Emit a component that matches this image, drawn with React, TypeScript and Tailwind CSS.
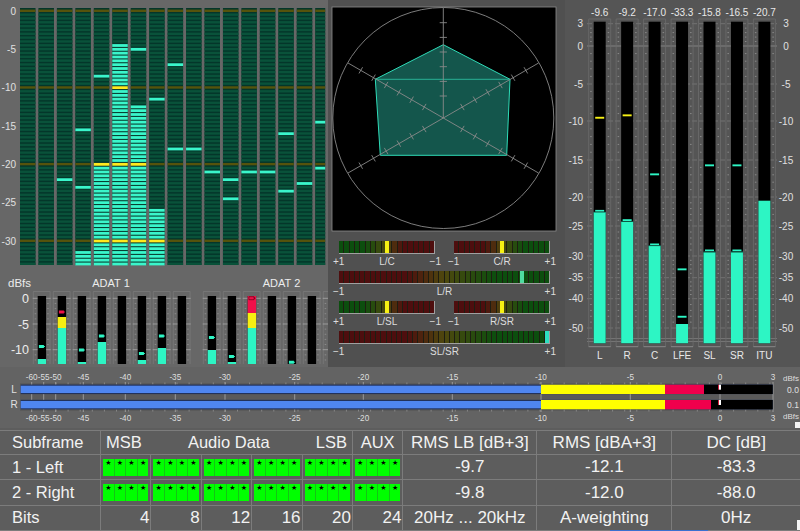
const TEAL = "#2df5c4";

// spectrum bars: fill start + peak holds, in dBfs
const bands: { fill?: number; peaks: number[] }[] = [
  { peaks: [] },
  { peaks: [] },
  { peaks: [-22] },
  { fill: -31.5, peaks: [-15.5, -23] },
  { fill: -20, peaks: [-8.5] },
  { fill: -4.5, peaks: [] },
  { fill: -12.5, peaks: [-5] },
  { fill: -26, peaks: [-11.5] },
  { peaks: [-7, -18] },
  { peaks: [-18] },
  { peaks: [-21] },
  { peaks: [-22, -24.5] },
  { peaks: [-21] },
  { peaks: [-21] },
  { peaks: [-16, -23.5] },
  { peaks: [-22.5] },
  { peaks: [-14.5, -20.5] },
];

function Spectrum() {
  const segs = Array.from({ length: 67 }, (_, i) => i);
  return (
    <svg viewBox="0 0 328 270" className="block w-[328px] h-[270px]">
      {[0, -5, -10, -15, -20, -25, -30].map((d) => (
        <text key={d} x={16} y={11 + -d * 7.667 + 3.5} textAnchor="end" fontSize={10} fill="#e0e0e0">
          {d}
        </text>
      ))}
      {bands.map((b, n) => {
        const x = 20 + n * 18.45;
        const w = n === 16 ? 10 : 15.5;
        return (
          <g key={n}>
            <rect x={x} y={8} width={w} height={257} fill="#04362a" />
            {segs.map((i) => {
              const db = -i / 2;
              const major = i % 20 === 0;
              const on = (b.fill !== undefined && db <= b.fill) || b.peaks.includes(db);
              const color = on ? (major ? "#ffe91e" : "#3af6cb") : major ? "#55530c" : "#09523a";
              return <rect key={i} x={x} y={11 + i * 3.833 - 1.4} width={w} height={on ? 2.8 : 2.4} fill={color} />;
            })}
          </g>
        );
      })}
    </svg>
  );
}

const adat: { x: number; top?: number; yellow?: number; red?: number; peak?: number; peakRed?: boolean }[] = [
  { x: 37.7, top: 359, peak: 346.3 },
  { x: 57.7, top: 328, yellow: 317, peak: 311.7, peakRed: true },
  { x: 77.7, top: 362, peak: 349.7 },
  { x: 97.7, top: 342, peak: 335.7 },
  { x: 117.7 },
  { x: 137.7, top: 360, peak: 353.3 },
  { x: 157.7, top: 348, peak: 335.7 },
  { x: 177.7 },
  { x: 207.7, top: 350, peak: 337.3 },
  { x: 227.7, top: 362, peak: 356.3 },
  { x: 247.7, top: 328, yellow: 313, red: 296, peak: 298, peakRed: true },
  { x: 267.7 },
  { x: 287.7, peak: 362 },
  { x: 307.7 },
];

function AdatMeters() {
  const ticks = Array.from({ length: 13 }, (_, i) => 298.3 + i * 5.14);
  return (
    <svg viewBox="0 270 328 97" className="block w-[328px] h-[97px]">
      <text x={8} y={287} fontSize={11.5} fill="#ececec">dBfs</text>
      <text x={111} y={287} fontSize={11} fill="#ececec" textAnchor="middle">ADAT 1</text>
      <text x={281.5} y={287} fontSize={11} fill="#ececec" textAnchor="middle">ADAT 2</text>
      {[0, -5, -10].map((d) => (
        <text key={d} x={29} y={298.3 + -d * 5.14 + 4.5} fontSize={12.5} fill="#ececec" textAnchor="end">
          {d}
        </text>
      ))}
      {[...adat, { x: 327.7 }].map((m) => (
        <g key={m.x} stroke="#7a7a7a" strokeWidth={0.8}>
          <path d={`M${m.x - 4.4} 364V291.5H${m.x + 12.4}V364`} fill="none" />
          {ticks.map((y, i) => (
            <path key={i} d={i % 5 === 0 ? `M${m.x - 5} ${y}H${m.x + 13}` : `M${m.x - 3} ${y}H${m.x - 1.5}M${m.x + 9.5} ${y}H${m.x + 11}`} stroke={i % 5 === 0 ? "#a8a8a8" : "#949494"} />
          ))}
        </g>
      ))}
      {adat.map((m) => (
        <g key={m.x}>
          <rect x={m.x} y={296} width={8.4} height={68} fill="#000" />
          {m.top !== undefined && <rect x={m.x} y={m.top} width={8.4} height={364 - m.top} fill={TEAL} />}
          {m.yellow !== undefined && m.top !== undefined && <rect x={m.x} y={m.yellow} width={8.4} height={m.top - m.yellow} fill="#f6ee12" />}
          {m.red !== undefined && m.yellow !== undefined && <rect x={m.x} y={m.red} width={8.4} height={m.yellow - m.red} fill="#f0104a" />}
          {m.peak !== undefined && (
            <path d={`M${m.x + 1.2} ${m.peak - 1.3}h5v1h1v1h-1v1h-5z`} fill={m.peakRed ? "#f0104a" : TEAL} stroke={m.red ? "#300" : "none"} strokeWidth={0.5} />
          )}
        </g>
      ))}
    </svg>
  );
}

function Vectorscope() {
  const cx = 443.3;
  const cy = 118;
  const spokes = [
    [0, -1],
    [-0.866, -0.5],
    [0.866, -0.5],
    [-0.866, 0.5],
    [0.866, 0.5],
  ];
  const radii = [22, 36.6, 51.3, 66, 80.6, 95.3];
  return (
    <svg viewBox="328 0 237 235" className="block w-[237px] h-[235px]">
      <rect x={332} y={7} width={224} height={224} fill="#000" stroke="#8c8c8c" strokeWidth={0.8} />
      <circle cx={cx} cy={cy} r={110.5} fill="none" stroke="#8a8a8a" strokeWidth={0.9} />
      <path d="M443.3 44.7L510 79.3L506.7 155.3H380.3L375.3 79.3Z" fill="#14564c" stroke="#2fdcb8" strokeWidth={1} />
      <path d="M375.3 79.3H510" stroke="#2fc8a8" strokeWidth={0.8} />
      {spokes.map(([dx, dy], i) => (
        <g key={i} stroke="#8a8a8a" strokeWidth={0.9}>
          <path d={`M${cx} ${cy}L${cx + dx * 110} ${cy + dy * 110}`} />
          {radii.map((r) => {
            const px = cx + dx * r;
            const py = cy + dy * r;
            return <path key={r} d={`M${px - dy * 3.6} ${py + dx * 3.6}L${px + dy * 3.6} ${py - dx * 3.6}`} />;
          })}
        </g>
      ))}
    </svg>
  );
}

const ledGreen = [12, 78, 14];
const ledYellow = [78, 72, 14];
const ledRed = [78, 14, 14];

function ledColor(t: number) {
  const mix = (a: number[], b: number[], k: number) => a.map((v, i) => Math.round(v + (b[i] - v) * k));
  const c = t < 0.5 ? mix(ledGreen, ledYellow, Math.max(0, (t - 0.25) / 0.25)) : mix(ledYellow, ledRed, Math.min(1, (t - 0.5) / 0.18));
  return `rgb(${c.join(",")})`;
}

// from "green" end to "red" end; redFirst flips the run
function CorrMeter({ count, redFirst, pos, marker }: { count: number; redFirst?: boolean; pos: number; marker: string }) {
  return (
    <div className="relative flex h-[13px] flex-1 gap-px border-b border-r border-[#a0a0a0] bg-[#1e1e12]">
      {Array.from({ length: count }, (_, i) => {
        const t = i / (count - 1);
        return <div key={i} className="flex-1" style={{ backgroundColor: ledColor(redFirst ? 1 - t : t) }} />;
      })}
      <div className="absolute top-0 h-full w-[4px]" style={{ left: pos, backgroundColor: marker }} />
    </div>
  );
}

function LabelRow({ items }: { items: string[] }) {
  return (
    <div className="-mx-[6px] mt-[2px] flex justify-between text-[10px] leading-[12px] text-[#dcdcdc]">
      {items.map((t) => (
        <span key={t}>{t}</span>
      ))}
    </div>
  );
}

function CorrelationPanel() {
  return (
    <div className="flex flex-col pl-[11px] pr-[15px] pt-[6px]">
      <div className="flex h-[30px] gap-[19px]">
        <div className="flex-1">
          <CorrMeter count={18} pos={46} marker="#f6f014" />
          <LabelRow items={["+1", "L/C", "−1"]} />
        </div>
        <div className="flex-1">
          <CorrMeter count={18} redFirst pos={46} marker="#f6f014" />
          <LabelRow items={["−1", "C/R", "+1"]} />
        </div>
      </div>
      <div className="h-[30px]">
        <CorrMeter count={40} redFirst pos={181} marker="#4fdca0" />
        <LabelRow items={["−1", "L/R", "+1"]} />
      </div>
      <div className="flex h-[30px] gap-[19px]">
        <div className="flex-1">
          <CorrMeter count={18} pos={46} marker="#f6f014" />
          <LabelRow items={["+1", "L/SL", "−1"]} />
        </div>
        <div className="flex-1">
          <CorrMeter count={18} redFirst pos={46} marker="#f6f014" />
          <LabelRow items={["−1", "R/SR", "+1"]} />
        </div>
      </div>
      <div className="h-[30px]">
        <CorrMeter count={40} redFirst pos={206} marker="#2ce0c0" />
        <LabelRow items={["−1", "SL/SR", "+1"]} />
      </div>
    </div>
  );
}

const channels = [
  { name: "L", val: "-9.6", top: 212, hold: [210.7], peaks: [{ y: 117.7, c: "#f6f014" }] },
  { name: "R", val: "-9.2", top: 221.7, hold: [220], peaks: [{ y: 115.3, c: "#f6f014" }] },
  { name: "C", val: "-17.0", top: 245.7, hold: [244.3], peaks: [{ y: 174.3, c: TEAL }] },
  { name: "LFE", val: "-33.3", top: 324, hold: [], peaks: [{ y: 269.3, c: TEAL }, { y: 316.7, c: TEAL }] },
  { name: "SL", val: "-15.8", top: 252.3, hold: [250.3], peaks: [{ y: 165.3, c: TEAL }] },
  { name: "SR", val: "-16.5", top: 252.3, hold: [250.3], peaks: [{ y: 165.3, c: TEAL }] },
  { name: "ITU", val: "-20.7", top: 200.7, hold: [], peaks: [] },
];

const scale: [string, number][] = [
  ["3", 23.7],
  ["0", 46],
  ["-5", 84],
  ["-10", 121],
  ["-15", 160],
  ["-20", 197],
  ["-25", 226],
  ["-30", 256],
  ["-35", 277.7],
  ["-40", 298.7],
  ["-50", 328],
];

function LevelMeters() {
  const minor: number[] = [];
  scale.slice(0, -1).forEach(([, y], i) => {
    const next = scale[i + 1][1];
    for (let k = 1; k < 5; k++) minor.push(y + ((next - y) * k) / 5);
  });
  return (
    <svg viewBox="565 0 235 367" className="block w-[235px] h-[367px]">
      {scale.map(([t, y]) => (
        <g key={t}>
          <text x={583} y={y + 3.5} fontSize={10} fill="#e0e0e0" textAnchor="end">{t}</text>
          <text x={786} y={y + 3.5} fontSize={10} fill="#e0e0e0" textAnchor="middle">{t}</text>
          <path d={`M587 ${y}H777`} stroke={t === "0" ? "#8e8e8e" : "#787878"} strokeWidth={0.8} strokeDasharray={t === "0" ? undefined : "5 2"} />
        </g>
      ))}
      <path d="M587 338.5H777M587 341.5H777" stroke="#828282" strokeWidth={0.7} />
      {channels.map((c, n) => {
        const x = 593.7 + n * 27.45;
        return (
          <g key={c.name}>
            <path d={`M${x - 5} 346.7V19H${x + 17}V346.7`} fill="none" stroke="#6c6c6c" strokeWidth={0.8} />
            <path d={`M${x - 5} 346.7H${x + 17}`} stroke="#969696" strokeWidth={0.8} />
            {minor.map((y) => (
              <path key={y} d={`M${x - 3.5} ${y}H${x - 2}M${x + 14} ${y}H${x + 15.5}`} stroke="#989898" strokeWidth={0.8} />
            ))}
            <text x={x + 6} y={15.5} fontSize={10} fill="#e8e8e8" textAnchor="middle">{c.val}</text>
            <text x={x + 6} y={358.5} fontSize={10} fill="#e8e8e8" textAnchor="middle">{c.name}</text>
            <rect x={x} y={21.7} width={12} height={321.6} fill="#000" />
            <rect x={x} y={c.top} width={12} height={343.3 - c.top} fill={TEAL} />
            {c.hold.map((y) => (
              <g key={y}>
                <rect x={x + 1.5} y={y - 0.8} width={9} height={1.8} fill={TEAL} />
                <rect x={x} y={y + 1} width={12} height={0.8} fill="#0d5a48" />
              </g>
            ))}
            {c.peaks.map((p) => (
              <rect key={p.y} x={x + 1.5} y={p.y - 0.9} width={9} height={1.9} fill={p.c} />
            ))}
          </g>
        );
      })}
    </svg>
  );
}

const lrTicks: [string, number][] = [
  ["-60", 31.7],
  ["-55", 43.7],
  ["-50", 55.7],
  ["-45", 83.3],
  ["-40", 125.3],
  ["-35", 175.3],
  ["-30", 225],
  ["-25", 294.7],
  ["-20", 363.3],
  ["-15", 452.3],
  ["-10", 541],
  ["-5", 630.3],
  ["0", 720],
  ["3", 773],
];

function StereoBars() {
  const rows = [
    { y: 385.7, redEnd: 704, val: "0.0", name: "L" },
    { y: 401, redEnd: 711, val: "0.1", name: "R" },
  ];
  const minor = Array.from({ length: 60 }, (_, i) => 56 + i * 12.1);
  return (
    <svg viewBox="0 367 800 61" className="block w-[800px] h-[61px]">
      <rect x={20} y={383} width={753} height={28} fill="#5a5a5a" />
      {minor.map((x) => (
        <path key={x} d={`M${x} 382.5v2M${x} 409.5v2`} stroke="#9a9a9a" strokeWidth={0.7} />
      ))}
      {lrTicks.map(([t, x]) => (
        <g key={t}>
          <text x={x} y={380} fontSize={8.2} fill="#dedede" textAnchor="middle">{t}</text>
          <text x={x} y={421} fontSize={8.2} fill="#dedede" textAnchor="middle">{t}</text>
          <path d={`M${x} 382V412`} stroke="#a8a8a8" strokeWidth={0.8} />
        </g>
      ))}
      {rows.map((r) => (
        <g key={r.name}>
          <rect x={20.7} y={r.y - 1.2} width={752} height={9.6} fill="#22325a" />
          <rect x={20.7} y={r.y} width={520.3} height={7.3} fill="#4f86f0" />
          <rect x={541} y={r.y - 1} width={124} height={9.3} fill="#ffff00" />
          <rect x={665} y={r.y - 1} width={r.redEnd - 665} height={9.3} fill="#f0004c" />
          <rect x={r.redEnd} y={r.y - 1} width={772.7 - r.redEnd} height={9.3} fill="#000" />
          <rect x={719} y={r.y - 1} width={2} height={5} fill="#fff" />
          <rect x={718} y={r.y - 1} width={1} height={5} fill="#d02040" />
          <text x={14} y={r.y + 7} fontSize={10} fill="#e0e0e0" textAnchor="middle">{r.name}</text>
          <text x={793} y={r.y + 7} fontSize={8.5} fill="#e0e0e0" textAnchor="middle">{r.val}</text>
        </g>
      ))}
      <text x={791} y={381} fontSize={8} fill="#dedede" textAnchor="middle">dBfs</text>
      <text x={791} y={419} fontSize={8} fill="#dedede" textAnchor="middle">dBfs</text>
      <rect x={795} y={422} width={5} height={6} fill="#f4f4f4" />
    </svg>
  );
}

function BitGroup() {
  return (
    <div className="flex h-[17px] w-full bg-[#00f000]">
      {[0, 1, 2, 3].map((i) => (
        <div
          key={i}
          className="flex flex-1 justify-center border-r border-[#14c414] bg-[#00ff00] font-['DejaVu_Sans',sans-serif] text-[7px] leading-[9px] text-black last:border-r-0"
        >
          ★
        </div>
      ))}
    </div>
  );
}

const cell = "flex items-center border-b border-r border-[#7c7c7c]";

function BitRow({ label, rms, rmsA, dc }: { label: string; rms: string; rmsA: string; dc: string }) {
  return (
    <>
      <div className={`${cell} pl-[12px] text-[16.5px]`}>{label}</div>
      {[0, 1, 2, 3, 4, 5].map((i) => (
        <div key={i} className={`${cell} px-[2px]`}>
          <BitGroup />
        </div>
      ))}
      <div className={`${cell} justify-center`}>{rms}</div>
      <div className={`${cell} justify-center`}>{rmsA}</div>
      <div className={`${cell} justify-center border-r-0`}>{dc}</div>
    </>
  );
}

function StatusTable() {
  return (
    <div className="relative h-[103px] bg-[#5d5d5d] pt-[2px] text-[17px] text-[#f2f2f2]">
      <div className="grid grid-cols-[101px_repeat(6,50.4px)_134px_135px_1fr] grid-rows-[24px_25.3px_25.3px_25.4px] border-t border-[#7c7c7c]">
        <div className={`${cell} pl-[12px] text-[16.5px]`}>Subframe</div>
        <div className={`${cell} col-span-5 justify-between px-[5px] text-[16.5px]`}>
          <span>MSB</span>
          <span>Audio Data</span>
          <span>LSB</span>
        </div>
        <div className={`${cell} justify-center text-[16.5px]`}>AUX</div>
        <div className={`${cell} justify-center`}>RMS LB [dB+3]</div>
        <div className={`${cell} justify-center`}>RMS [dBA+3]</div>
        <div className={`${cell} justify-center border-r-0`}>DC [dB]</div>

        <BitRow label="1 - Left" rms="-9.7" rmsA="-12.1" dc="-83.3" />
        <BitRow label="2 - Right" rms="-9.8" rmsA="-12.0" dc="-88.0" />

        <div className={`${cell} pl-[12px] text-[16.5px]`}>Bits</div>
        {["4", "8", "12", "16", "20", "24"].map((b) => (
          <div key={b} className={`${cell} justify-end pr-[1px]`}>
            {b}
          </div>
        ))}
        <div className={`${cell} justify-center`}>20Hz ... 20kHz</div>
        <div className={`${cell} justify-center`}>A-weighting</div>
        <div className={`${cell} justify-center border-r-0`}>0Hz</div>
      </div>
      <div className="absolute bottom-0 left-[610px] h-[1px] w-[98px] bg-[#3a70d0]" />
      <div className="absolute bottom-[1px] right-0 h-[10px] w-[3px] bg-[#f4f4f4]" />
    </div>
  );
}

export default function App() {
  return (
    <div className="flex h-[531px] w-[800px] flex-col overflow-hidden bg-[#5f5f5f] font-['Liberation_Sans',Arial,sans-serif]">
      <div className="flex h-[367px]">
        <div className="w-[328px] bg-[#676767]">
          <Spectrum />
          <AdatMeters />
        </div>
        <div className="w-[237px] bg-[#505050]">
          <Vectorscope />
          <CorrelationPanel />
        </div>
        <div className="w-[235px] bg-[#555555]">
          <LevelMeters />
        </div>
      </div>
      <div className="bg-[#636363]">
        <StereoBars />
      </div>
      <StatusTable />
    </div>
  );
}
